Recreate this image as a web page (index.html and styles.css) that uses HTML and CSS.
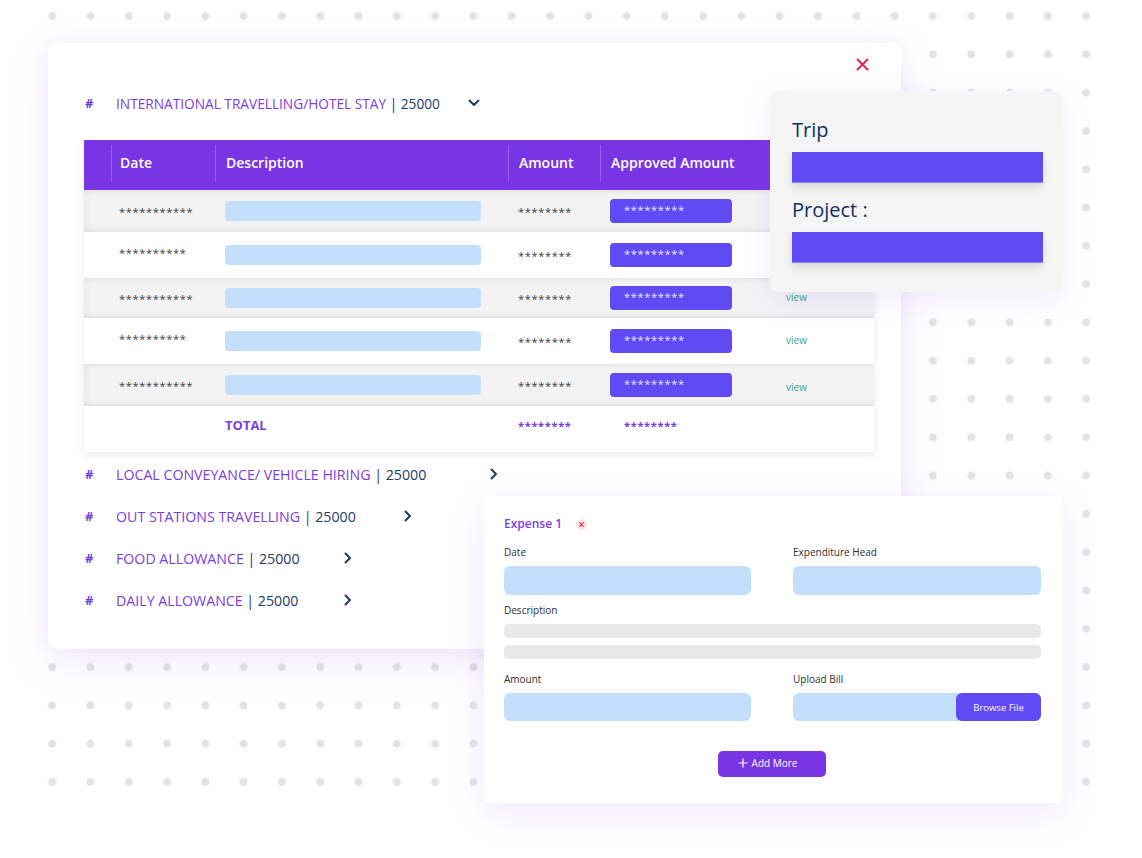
FILE: index.html
```html
<!DOCTYPE html>
<html lang="en">
<head>
<meta charset="utf-8">
<title>Expenses</title>
<link rel="stylesheet" href="styles.css">
</head>
<body>
<div class="stage">
  <div class="board">
    <section class="main-card">
      <button class="close-btn" aria-label="Close">
        <svg width="13" height="13" viewBox="0 0 13 13"><path d="M1.5 1.5 L11.5 11.5 M11.5 1.5 L1.5 11.5" stroke="#e4264d" stroke-width="2" stroke-linecap="round"/></svg>
      </button>

      <div class="cat cat-head">
        <span class="hash">#</span>
        <span class="cat-name">INTERNATIONAL TRAVELLING/HOTEL STAY</span><span class="cat-amt">&nbsp;| 25000</span>
        <svg class="chev chev-down" width="12" height="8" viewBox="0 0 12 8"><path d="M1.5 1.5 L6 6 L10.5 1.5" fill="none" stroke="#1b3a66" stroke-width="2" stroke-linecap="round" stroke-linejoin="round"/></svg>
      </div>

      <div class="table">
        <div class="trow thead">
          <div class="cell c-pad"></div>
          <div class="cell c-date sep">Date</div>
          <div class="cell c-desc sep">Description</div>
          <div class="cell c-amt sep">Amount</div>
          <div class="cell c-appr sep">Approved Amount</div>
          <div class="cell c-view"></div>
        </div>
        <div class="trow grey h42">
          <div class="cell c-pad"></div>
          <div class="cell c-date stars">***********</div>
          <div class="cell c-desc"><span class="desc-bar"></span></div>
          <div class="cell c-amt stars">********</div>
          <div class="cell c-appr"><span class="appr-btn">*********</span></div>
          <div class="cell c-view"></div>
        </div>
        <div class="trow white h46">
          <div class="cell c-pad"></div>
          <div class="cell c-date stars up">**********</div>
          <div class="cell c-desc"><span class="desc-bar"></span></div>
          <div class="cell c-amt stars">********</div>
          <div class="cell c-appr"><span class="appr-btn">*********</span></div>
          <div class="cell c-view"></div>
        </div>
        <div class="trow grey h40">
          <div class="cell c-pad"></div>
          <div class="cell c-date stars">***********</div>
          <div class="cell c-desc"><span class="desc-bar"></span></div>
          <div class="cell c-amt stars">********</div>
          <div class="cell c-appr"><span class="appr-btn">*********</span></div>
          <div class="cell c-view"><span class="view up">view</span></div>
        </div>
        <div class="trow white h46">
          <div class="cell c-pad"></div>
          <div class="cell c-date stars up">**********</div>
          <div class="cell c-desc"><span class="desc-bar"></span></div>
          <div class="cell c-amt stars">********</div>
          <div class="cell c-appr"><span class="appr-btn">*********</span></div>
          <div class="cell c-view"><span class="view up">view</span></div>
        </div>
        <div class="trow grey h42">
          <div class="cell c-pad"></div>
          <div class="cell c-date stars">***********</div>
          <div class="cell c-desc"><span class="desc-bar"></span></div>
          <div class="cell c-amt stars">********</div>
          <div class="cell c-appr"><span class="appr-btn">*********</span></div>
          <div class="cell c-view"><span class="view">view</span></div>
        </div>
        <div class="trow white h46 total">
          <div class="cell c-pad"></div>
          <div class="cell c-date"></div>
          <div class="cell c-desc total-label">TOTAL</div>
          <div class="cell c-amt stars purple">********</div>
          <div class="cell c-appr stars purple indent">********</div>
          <div class="cell c-view"></div>
        </div>
      </div>

      <ul class="cat-list">
        <li class="cat">
          <span class="hash">#</span>
          <span class="cat-name">LOCAL CONVEYANCE/ VEHICLE HIRING</span><span class="cat-amt">&nbsp;| 25000</span>
          <svg class="chev g1" width="8" height="12" viewBox="0 0 8 12"><path d="M1.5 1.5 L6 6 L1.5 10.5" fill="none" stroke="#1b3a66" stroke-width="2" stroke-linecap="round" stroke-linejoin="round"/></svg>
        </li>
        <li class="cat">
          <span class="hash">#</span>
          <span class="cat-name">OUT STATIONS TRAVELLING</span><span class="cat-amt">&nbsp;| 25000</span>
          <svg class="chev g2" width="8" height="12" viewBox="0 0 8 12"><path d="M1.5 1.5 L6 6 L1.5 10.5" fill="none" stroke="#1b3a66" stroke-width="2" stroke-linecap="round" stroke-linejoin="round"/></svg>
        </li>
        <li class="cat">
          <span class="hash">#</span>
          <span class="cat-name">FOOD ALLOWANCE</span><span class="cat-amt">&nbsp;| 25000</span>
          <svg class="chev g3" width="8" height="12" viewBox="0 0 8 12"><path d="M1.5 1.5 L6 6 L1.5 10.5" fill="none" stroke="#1b3a66" stroke-width="2" stroke-linecap="round" stroke-linejoin="round"/></svg>
        </li>
        <li class="cat">
          <span class="hash">#</span>
          <span class="cat-name">DAILY ALLOWANCE</span><span class="cat-amt">&nbsp;| 25000</span>
          <svg class="chev g4" width="8" height="12" viewBox="0 0 8 12"><path d="M1.5 1.5 L6 6 L1.5 10.5" fill="none" stroke="#1b3a66" stroke-width="2" stroke-linecap="round" stroke-linejoin="round"/></svg>
        </li>
      </ul>
    </section>
  </div>

  <aside class="trip-card">
    <div class="trip-label">Trip</div>
    <div class="trip-bar"></div>
    <div class="trip-label">Project :</div>
    <div class="trip-bar"></div>
  </aside>

  <section class="expense-card">
    <div class="exp-title">
      <span>Expense 1</span>
      <span class="exp-x"><svg width="5" height="5" viewBox="0 0 5 5"><path d="M0.6 0.6 L4.4 4.4 M4.4 0.6 L0.6 4.4" stroke="#e0344c" stroke-width="1.1" stroke-linecap="round"/></svg></span>
    </div>
    <div class="exp-grid">
      <div class="field">
        <label class="flabel">Date</label>
        <div class="finput"></div>
      </div>
      <div class="field">
        <label class="flabel">Expenditure Head</label>
        <div class="finput"></div>
      </div>
      <div class="field wide">
        <label class="flabel">Description</label>
        <div class="fbar"></div>
        <div class="fbar"></div>
      </div>
      <div class="field">
        <label class="flabel">Amount</label>
        <div class="finput short"></div>
      </div>
      <div class="field">
        <label class="flabel">Upload Bill</label>
        <div class="finput short upload"><span class="browse">Browse File</span></div>
      </div>
    </div>
    <div class="add-row">
      <button class="add-btn"><svg width="10" height="10" viewBox="0 0 10 10"><path d="M5 0.5 V9.5 M0.5 5 H9.5" stroke="#fff" stroke-width="1.2"/></svg>Add More</button>
    </div>
  </section>
</div>
</body>
</html>
```
FILE: styles.css
```css
* { box-sizing: border-box; }
html, body { margin: 0; padding: 0; background: #ffffff; }
body { font-family: "Open Sans", "Noto Sans", "DejaVu Sans", sans-serif; color: #222; }

.stage {
  position: relative;
  width: 1142px;
  height: 858px;
  overflow: hidden;
}

.board {
  margin-left: 33px;
  width: 1072px;
  height: 801px;
  padding-top: 43px;
  padding-left: 15px;
  background-image: radial-gradient(circle, #e3e3e7 3.6px, rgba(227,227,231,0) 4.4px);
  background-size: 38.3px 38.3px;
  background-position: 0 -3.15px;
}

.main-card {
  position: relative;
  width: 853px;
  height: 606px;
  background: #ffffff;
  border-radius: 9px;
  box-shadow: 0 12px 44px rgba(140, 90, 240, 0.13), 0 0 18px rgba(140, 90, 240, 0.06);
  padding: 47px 27px 0 36px;
}

.close-btn {
  position: absolute;
  top: 15px;
  right: 32px;
  width: 13px;
  height: 13px;
  padding: 0;
  border: 0;
  background: none;
  display: flex;
}

.cat {
  display: flex;
  align-items: center;
  height: 26px;
  font-size: 14.2px;
  white-space: nowrap;
}
.cat-head { font-size: 13.7px; }
.hash {
  width: 32px;
  padding-left: 1px;
  color: #6e3fe0;
  font-weight: 700;
  font-size: 13px;
}
.cat-name { color: #7a40dc; }
.cat-amt { color: #1b3a66; }
.chev { flex: none; }
.chev-down { margin-left: 28px; }
.g1 { margin-left: 64px; }
.g2 { margin-left: 48px; }
.g3 { margin-left: 44px; }
.g4 { margin-left: 46px; }

.table {
  margin-top: 24px;
  width: 790px;
  box-shadow: 0 3px 8px rgba(0, 0, 0, 0.08);
}
.trow {
  display: grid;
  grid-template-columns: 27px 104px 293px 92px 176px 98px;
  align-items: center;
}
.thead {
  height: 50px;
  background: #7935e3;
  color: #ffffff;
  font-weight: 600;
  font-size: 14px;
  padding-bottom: 5px;
}
.cell { padding-left: 8px; white-space: nowrap; }
.c-pad { padding-left: 0; }
.c-desc, .c-amt, .c-appr, .c-view { padding-left: 10px; }
.thead .cell { height: 36px; display: flex; align-items: center; }
.thead .sep { border-left: 1px solid rgba(255, 255, 255, 0.22); }

.grey {
  background: #f3f3f4;
  box-shadow: inset 0 6px 6px -5px rgba(0,0,0,0.08), inset 0 -6px 6px -5px rgba(0,0,0,0.10), inset 8px 0 8px -7px rgba(0,0,0,0.06);
}
.white { background: #ffffff; }
.h40 { height: 40px; }
.h42 { height: 42px; }
.h46 { height: 46px; }
.total { padding-bottom: 8px; }

.stars {
  font-size: 11px;
  color: #3c3c3c;
  letter-spacing: 0.7px;
}
.up { position: relative; top: -3px; }
.purple { color: #7a40dc; font-weight: 700; }
.indent { padding-left: 24px; }

.desc-bar {
  display: block;
  width: 256px;
  height: 20px;
  border-radius: 4px;
  background: #c3dffb;
}
.appr-btn {
  display: block;
  width: 122px;
  height: 24px;
  line-height: 22px;
  border-radius: 4px;
  background: #604af3;
  color: #e9e6ff;
  font-size: 11px;
  letter-spacing: 0.7px;
  padding-left: 14px;
}
.view {
  display: inline-block;
  font-size: 10px;
  color: #3aa58a;
}
.total-label {
  color: #7a40dc;
  font-weight: 700;
  font-size: 13px;
}

.cat-list {
  list-style: none;
  margin: 9px 0 0 0;
  padding: 0;
  display: flex;
  flex-direction: column;
  gap: 16px;
}

/* Trip card */
.trip-card {
  position: absolute;
  left: 770px;
  top: 91px;
  width: 293px;
  height: 201px;
  background: #f5f5f5;
  border-radius: 9px;
  box-shadow: 0 8px 30px rgba(140, 90, 240, 0.12);
  padding: 26px 20px 0 22px;
  display: flex;
  flex-direction: column;
}
.trip-label {
  font-size: 20px;
  line-height: 26px;
  font-weight: 500;
  color: #0f2f63;
}
.trip-bar {
  margin-top: 9px;
  margin-bottom: 14px;
  height: 31px;
  background: #6149f4;
  box-shadow: 0 5px 8px rgba(0, 0, 0, 0.12);
  border-bottom: 1px solid #8f7cf7;
}

/* Expense card */
.expense-card {
  position: absolute;
  left: 484px;
  top: 496px;
  width: 579px;
  height: 307px;
  background: #ffffff;
  border-radius: 6px;
  box-shadow: 0 10px 36px rgba(140, 90, 240, 0.14);
  padding: 19px 22px 0 20px;
}
.exp-title {
  display: flex;
  align-items: center;
  height: 16px;
  font-size: 12px;
  font-weight: 600;
  color: #7a3fe0;
}
.exp-x {
  margin-left: 14px;
  width: 11px;
  height: 11px;
  border-radius: 50%;
  background: #fde3e3;
  display: flex;
  align-items: center;
  justify-content: center;
  margin-top: 2px;
}
.exp-grid {
  margin-top: 14px;
  display: grid;
  grid-template-columns: 247px 248px;
  column-gap: 42px;
  row-gap: 8px;
}
.field { display: flex; flex-direction: column; }
.field.wide { grid-column: 1 / span 2; margin-bottom: 5px; }
.flabel {
  display: block;
  font-size: 10px;
  line-height: 14px;
  color: #2e2e2e;
  margin-bottom: 7px;
}
.finput {
  height: 29px;
  border-radius: 6px;
  background: #c3dffb;
}
.finput.short { height: 28px; }
.fbar {
  height: 14px;
  border-radius: 5px;
  background: #e8e8e8;
}
.fbar + .fbar { margin-top: 7px; }
.upload { display: flex; justify-content: flex-end; }
.browse {
  width: 85px;
  height: 28px;
  border-radius: 6px;
  background: #6149f4;
  color: #ffffff;
  font-size: 9.5px;
  display: flex;
  align-items: center;
  justify-content: center;
}
.add-row {
  display: flex;
  justify-content: center;
  margin-top: 30px;
}
.add-btn {
  width: 108px;
  height: 26px;
  border: 0;
  border-radius: 5px;
  background: #7935e3;
  color: #ffffff;
  font-family: inherit;
  font-size: 10px;
  display: flex;
  align-items: center;
  justify-content: center;
  gap: 4px;
  padding: 0 8px 2px 0;
  margin-left: -2px;
}
```
